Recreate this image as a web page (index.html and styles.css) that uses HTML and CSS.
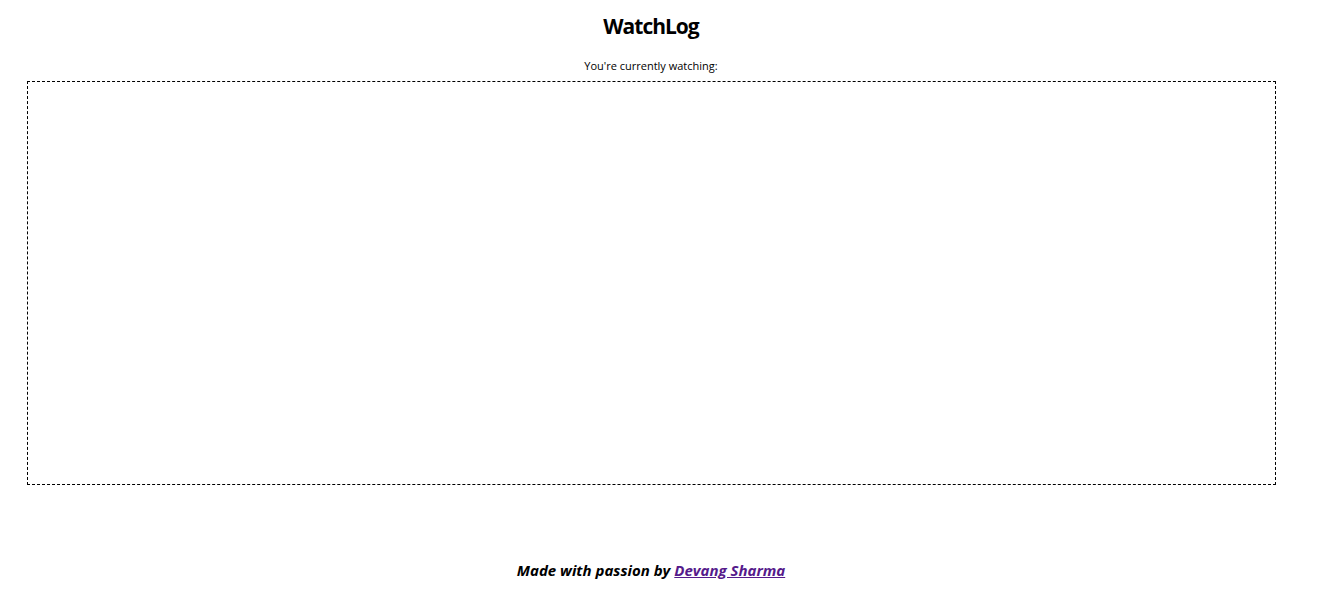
FILE: index.html
```html
<!DOCTYPE html>
<html>
<head>
<meta charset="utf-8">
<title>WatchLog</title>
<link rel="stylesheet" href="styles.css">
</head>
<body>
<div class="page">
  <h1 class="title">WatchLog</h1>
  <p class="caption">You're currently watching:</p>
  <div class="watching"></div>
  <footer class="footer">Made with passion by <a class="author" href="#">Devang Sharma</a></footer>
</div>
</body>
</html>
```

FILE: styles.css
```css
html, body {
  margin: 0;
  padding: 0;
  background: #fff;
}
body {
  padding: 8px;
  font-family: "Open Sans", "DejaVu Sans", sans-serif;
  color: #000;
}
.page {
  width: 1286px;
  display: flex;
  flex-direction: column;
  align-items: center;
}
.title {
  margin: 3px 0 0;
  font-size: 21px;
  line-height: 30px;
  font-weight: 700;
  letter-spacing: -1px;
}
.caption {
  margin: 18px 0 0;
  font-size: 11px;
  line-height: 14px;
}
.watching {
  margin-top: 8px;
  width: 1249px;
  height: 404px;
  box-sizing: border-box;
  border: 1px dashed #000;
}
.footer {
  margin-top: 75px;
  font-size: 15px;
  line-height: 20px;
  font-weight: 700;
  font-style: italic;
}
.author {
  color: #551a8b;
}
```
